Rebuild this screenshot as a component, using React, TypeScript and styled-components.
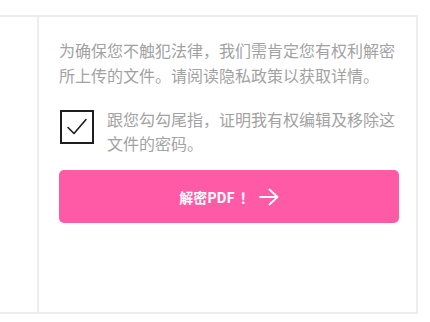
import React from "react";
import styled, { createGlobalStyle } from "styled-components";

const COLORS = {
  border: "#ededed",
  text: "#a2a2a2",
  pink: "#ff5aa6",
  dark: "#1e1e1e",
  white: "#ffffff",
};

const GlobalStyle = createGlobalStyle`
  html, body {
    margin: 0;
    padding: 0;
    background: ${COLORS.white};
  }
  body {
    font-family: "Noto Sans CJK SC", "Noto Sans", sans-serif;
  }
`;

const Frame = styled.div`
  margin-top: 15px;
  width: 418px;
  height: 299px;
  box-sizing: border-box;
  border-top: 2px solid ${COLORS.border};
  border-bottom: 2px solid ${COLORS.border};
  border-right: 2px solid ${COLORS.border};
  display: grid;
  grid-template-columns: 39px 1fr;
`;

const Side = styled.div`
  border-right: 2px solid ${COLORS.border};
`;

const Panel = styled.div`
  padding: 21px 17px 0 20px;
  display: flex;
  flex-direction: column;
`;

const Notice = styled.p`
  margin: 0;
  font-size: 16px;
  line-height: 25px;
  color: ${COLORS.text};
`;

const ConsentRow = styled.label`
  display: flex;
  align-items: flex-start;
  gap: 13px;
  margin-top: 19px;
`;

const Box = styled.span`
  flex: none;
  width: 34px;
  height: 34px;
  margin: 3px 0 0 1px;
  box-sizing: border-box;
  border: 2px solid ${COLORS.dark};
  display: flex;
  align-items: center;
  justify-content: center;
`;

const ConsentText = styled.span`
  font-size: 16px;
  line-height: 24px;
  color: ${COLORS.text};
`;

const Unlock = styled.button`
  margin-top: 15px;
  height: 53px;
  width: 100%;
  border: none;
  border-radius: 5px;
  background: ${COLORS.pink};
  color: ${COLORS.white};
  font-family: inherit;
  font-size: 14px;
  font-weight: 700;
  display: flex;
  align-items: center;
  justify-content: center;
  gap: 5px;
  cursor: pointer;
`;

const Bang = styled.span`
  margin-left: 5px;
`;

export default function App() {
  return (
    <>
      <GlobalStyle />
      <Frame>
        <Side />
        <Panel>
          <Notice>
            为确保您不触犯法律，我们需肯定您有权利解密所上传的文件。请阅读隐私政策以获取详情。
          </Notice>
          <ConsentRow>
            <Box>
              <svg width="22" height="20" viewBox="0 0 22 20" fill="none">
                <path
                  d="M2 10.5 L8 16.5 L20 2.5"
                  stroke={COLORS.dark}
                  strokeWidth="1.6"
                  strokeLinecap="round"
                  strokeLinejoin="round"
                />
              </svg>
            </Box>
            <ConsentText>
              跟您勾勾尾指，证明我有权编辑及移除这文件的密码。
            </ConsentText>
          </ConsentRow>
          <Unlock>
            <span>
              解密PDF<Bang>！</Bang>
            </span>
            <svg width="20" height="18" viewBox="0 0 20 18" fill="none">
              <path
                d="M1 9 H18.5 M10.5 1.5 L18.5 9 L10.5 16.5"
                stroke={COLORS.white}
                strokeWidth="1.8"
                strokeLinecap="round"
                strokeLinejoin="round"
              />
            </svg>
          </Unlock>
        </Panel>
      </Frame>
    </>
  );
}
